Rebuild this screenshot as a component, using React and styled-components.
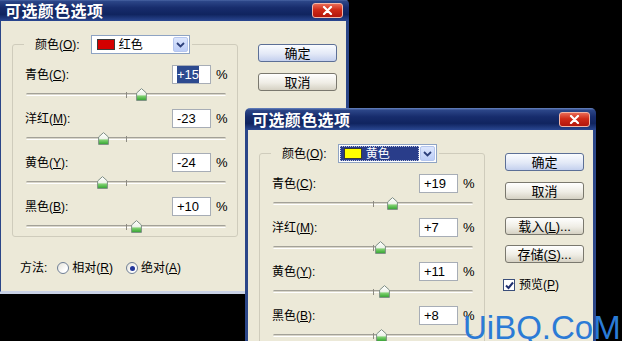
import React from "react";
import styled, { createGlobalStyle, css } from "styled-components";

const GlobalStyle = createGlobalStyle`
  html, body {
    margin: 0;
    padding: 0;
    background: #000;
  }
  body {
    font-family: "Liberation Sans", "Noto Sans CJK SC", sans-serif;
  }
`;

const Desktop = styled.div`
  position: relative;
  width: 622px;
  height: 341px;
  background: #000;
  overflow: hidden;
`;

const Window = styled.div`
  position: absolute;
  left: ${(p) => p.$x}px;
  top: ${(p) => p.$y}px;
  width: 351px;
  height: 295px;
  display: flex;
  flex-direction: column;
`;

const TitleBar = styled.div`
  flex: none;
  height: 22px;
  box-sizing: border-box;
  display: flex;
  align-items: center;
  justify-content: space-between;
  padding: 0 6px 0 7px;
  border-radius: 5px 5px 0 0;
  background: linear-gradient(
    180deg,
    #6a86c2 0%,
    #2c4688 10%,
    #172c6c 40%,
    #10245f 70%,
    #2a4791 100%
  );
`;

const Title = styled.span`
  color: #fff;
  font-family: "Noto Sans CJK SC", sans-serif;
  font-weight: 700;
  font-size: 16px;
  letter-spacing: 0.4px;
  line-height: 1;
`;

const CloseButton = styled.div`
  width: 31px;
  height: 15px;
  box-sizing: border-box;
  border: 1px solid #f2b6a8;
  border-radius: 3px;
  background: linear-gradient(180deg, #e96a55 0%, #cf2a17 45%, #b3160c 100%);
  display: flex;
  align-items: center;
  justify-content: center;
`;

const Frame = styled.div`
  flex: 1;
  display: flex;
  gap: 20px;
  padding: 14px 9px 0 11px;
  background: #ece9d8;
  border: 3px solid #2b4688;
  border-top: none;
  border-bottom-color: #c9d2e6;
`;

const LeftColumn = styled.div`
  width: 226px;
  display: flex;
  flex-direction: column;
`;

const Group = styled.fieldset`
  margin: 0;
  width: 226px;
  height: 202px;
  box-sizing: border-box;
  padding: 11px 0 0 11px;
  border: 1px solid #cfccbc;
  border-radius: 3px;
`;

const Legend = styled.legend`
  display: flex;
  align-items: center;
  gap: 11px;
  height: 19px;
  padding: 0 2px 0 11px;
`;

const Text = styled.span`
  font-size: 12px;
  color: #000;
  line-height: 1;
  white-space: nowrap;
`;

const Select = styled.div`
  width: 99px;
  height: 19px;
  box-sizing: border-box;
  border: 1px solid #8ea3c3;
  background: #fff;
  padding: 1px;
  display: flex;
  gap: 1px;
`;

const SelectValue = styled.div`
  flex: 1;
  display: flex;
  align-items: center;
  gap: 4px;
  padding-left: 4px;
  color: #000;
  ${(p) =>
    p.$focused &&
    css`
      background: #293d8a;
      color: #fff;
      outline: 1px dotted #b9c2e0;
      outline-offset: -1px;
    `}
`;

const SelectText = styled.span`
  font-size: 12px;
  line-height: 1;
  color: inherit;
`;

const Swatch = styled.span`
  width: 18px;
  height: 11px;
  box-sizing: border-box;
  background: ${(p) => p.$color};
  border: 1px solid #3a3a3a;
`;

const ArrowButton = styled.div`
  width: 15px;
  box-sizing: border-box;
  border: 1px solid #b5c6ee;
  border-radius: 2px;
  background: linear-gradient(180deg, #dce6fd 0%, #bccdf7 100%);
  display: flex;
  align-items: center;
  justify-content: center;
`;

const Row = styled.div`
  height: 44px;
  padding-left: 1px;
`;

const FieldLine = styled.div`
  display: grid;
  grid-template-columns: 147px 39px auto;
  align-items: center;
  height: 19px;
`;

const NumberBox = styled.div`
  height: 19px;
  box-sizing: border-box;
  border: 1px solid #a7adb6;
  background: #fff;
  padding-left: 4px;
  display: flex;
  align-items: center;
  font-size: 13px;
  color: #000;
`;

const Selected = styled.span`
  background: #2d4a8f;
  color: #fff;
  padding: 1px 0;
`;

const Percent = styled.span`
  margin-left: 5px;
  font-size: 13px;
  color: #000;
`;

const SliderLine = styled.div`
  height: 25px;
  box-sizing: border-box;
  padding: 9px 0 0 1px;
`;

const Track = styled.div`
  position: relative;
  width: 200px;
  height: 3px;
  box-sizing: border-box;
  border-top: 1px solid #a3a198;
  border-bottom: 1px solid #fff;
  background: #d9d6ca;
  border-radius: 2px;
`;

const Tick = styled.span`
  position: absolute;
  left: 100px;
  top: -2px;
  width: 1px;
  height: 6px;
  background: #8d8b83;
`;

const Thumb = styled.svg`
  position: absolute;
  top: -6px;
`;

const MethodRow = styled.div`
  margin-top: 22px;
  height: 18px;
  padding-left: 8px;
  display: flex;
  align-items: center;
`;

const Option = styled.label`
  display: flex;
  align-items: center;
  gap: 3px;
  margin-left: ${(p) => p.$gap}px;
`;

const Radio = styled.span`
  width: 12px;
  height: 12px;
  box-sizing: border-box;
  border-radius: 50%;
  border: 1px solid #6f7f96;
  background: linear-gradient(135deg, #e4e2d8 0%, #fff 70%);
  display: flex;
  align-items: center;
  justify-content: center;
  &::after {
    content: "";
    width: 5px;
    height: 5px;
    border-radius: 50%;
    background: ${(p) => (p.$checked ? "#23379a" : "transparent")};
  }
`;

const RightColumn = styled.div`
  width: 79px;
  padding-top: 9px;
  display: flex;
  flex-direction: column;
`;

const Button = styled.div`
  height: 18px;
  margin-top: ${(p) => p.$top || 0}px;
  box-sizing: border-box;
  border: 1px solid ${(p) => (p.$default ? "#5c6f96" : "#7a786e")};
  border-radius: 3px;
  background: ${(p) =>
    p.$default
      ? "linear-gradient(180deg, #fafcff 0%, #e3e9f7 55%, #c4d0ee 100%)"
      : "linear-gradient(180deg, #ffffff 0%, #efede5 55%, #d5d1c3 100%)"};
  display: flex;
  align-items: center;
  justify-content: center;
  font-size: 13px;
  color: #000;
  line-height: 1;
`;

const CheckRow = styled.label`
  margin: 16px 0 0 -2px;
  display: flex;
  align-items: center;
  gap: 4px;
`;

const CheckBox = styled.span`
  width: 12px;
  height: 12px;
  box-sizing: border-box;
  border: 1px solid #3a4e7a;
  background: #fff;
  display: flex;
  align-items: center;
  justify-content: center;
`;

const Watermark = styled.div`
  position: absolute;
  left: 463px;
  top: 311px;
  font-family: "Liberation Sans", sans-serif;
  font-size: 33px;
  line-height: 33px;
  color: #2b7bd6;
  white-space: nowrap;
`;

const ThumbIcon = ({ value }) => (
  <Thumb width="11" height="13" viewBox="0 0 11 13" style={{ left: 100 + value - 5 }}>
    <defs>
      <linearGradient id="thumbFill" x1="0" y1="0" x2="0" y2="1">
        <stop offset="0" stopColor="#ffffff" />
        <stop offset="0.5" stopColor="#eef3ea" />
        <stop offset="0.65" stopColor="#7ccf6e" />
        <stop offset="1" stopColor="#2da52a" />
      </linearGradient>
    </defs>
    <path d="M5.5 0.6 L10.4 5 L10.4 12.4 L0.6 12.4 L0.6 5 Z" fill="url(#thumbFill)" stroke="#7f8f86" strokeWidth="1" />
  </Thumb>
);

const Slider = ({ value }) => (
  <SliderLine>
    <Track>
      <Tick />
      <ThumbIcon value={value} />
    </Track>
  </SliderLine>
);

const Label = ({ name, keyChar }) => (
  <Text>
    {name}(<u>{keyChar}</u>):
  </Text>
);

const Dialog = ({ x, y, color, colorName, focused, values, selectFirst }) => {
  const rows = [
    ["青色", "C"],
    ["洋红", "M"],
    ["黄色", "Y"],
    ["黑色", "B"],
  ];

  return (
    <Window $x={x} $y={y}>
      <TitleBar>
        <Title>可选颜色选项</Title>
        <CloseButton>
          <svg width="11" height="9" viewBox="0 0 11 9">
            <path d="M2 1 L9 8 M9 1 L2 8" stroke="#fff" strokeWidth="2.2" strokeLinecap="round" />
          </svg>
        </CloseButton>
      </TitleBar>
      <Frame>
        <LeftColumn>
          <Group>
            <Legend>
              <Label name="颜色" keyChar="O" />
              <Select>
                <SelectValue $focused={focused}>
                  <Swatch $color={color} />
                  <SelectText>{colorName}</SelectText>
                </SelectValue>
                <ArrowButton>
                  <svg width="9" height="6" viewBox="0 0 9 6">
                    <path d="M1 1 L4.5 4.5 L8 1" fill="none" stroke="#2c3f7a" strokeWidth="1.8" />
                  </svg>
                </ArrowButton>
              </Select>
            </Legend>
            {rows.map(([name, keyChar], i) => {
              const v = values[i];
              const shown = v > 0 ? `+${v}` : `${v}`;
              return (
                <Row key={name}>
                  <FieldLine>
                    <Label name={name} keyChar={keyChar} />
                    <NumberBox>
                      {selectFirst && i === 0 ? <Selected>{shown}</Selected> : shown}
                    </NumberBox>
                    <Percent>%</Percent>
                  </FieldLine>
                  <Slider value={v} />
                </Row>
              );
            })}
          </Group>
          <MethodRow>
            <Text>方法:</Text>
            <Option $gap={10}>
              <Radio />
              <Text>
                相对(<u>R</u>)
              </Text>
            </Option>
            <Option $gap={13}>
              <Radio $checked />
              <Text>
                绝对(<u>A</u>)
              </Text>
            </Option>
          </MethodRow>
        </LeftColumn>
        <RightColumn>
          <Button $default>确定</Button>
          <Button $top={11}>取消</Button>
          <Button $top={17}>
            载入(<u>L</u>)...
          </Button>
          <Button $top={10}>
            存储(<u>S</u>)...
          </Button>
          <CheckRow>
            <CheckBox>
              <svg width="9" height="9" viewBox="0 0 9 9">
                <path d="M1 4.5 L3.5 7 L8 1.5" fill="none" stroke="#1f2f6e" strokeWidth="2" />
              </svg>
            </CheckBox>
            <Text>
              预览(<u>P</u>)
            </Text>
          </CheckRow>
        </RightColumn>
      </Frame>
    </Window>
  );
};

export default function App() {
  return (
    <>
      <GlobalStyle />
      <Desktop>
        <Dialog x={-2} y={-1} color="#d40000" colorName="红色" values={[15, -23, -24, 10]} selectFirst />
        <Dialog x={245} y={108} color="#ffff00" colorName="黄色" values={[19, 7, 11, 8]} focused />
        <Watermark>UiBQ.CoM</Watermark>
      </Desktop>
    </>
  );
}
